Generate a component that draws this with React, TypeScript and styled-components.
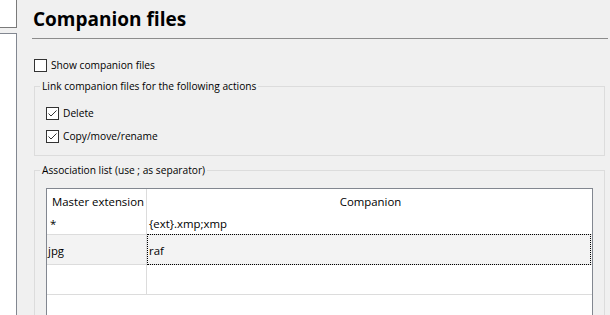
import styled, { createGlobalStyle } from 'styled-components';

const GlobalStyle = createGlobalStyle`
  html, body {
    margin: 0;
    padding: 0;
    background: #f0f0f0;
  }
  body {
    font-family: 'Open Sans', 'Noto Sans', sans-serif;
    font-size: 10.2px;
    color: #000;
  }
`;

const Page = styled.div`
  display: flex;
  width: 610px;
  height: 315px;
  overflow: hidden;
  background: #f0f0f0;
`;

const Sidebar = styled.div`
  width: 17px;
  display: flex;
  flex-direction: column;
  gap: 5px;
  flex-shrink: 0;
`;

const SearchBox = styled.div`
  height: 27px;
  background: #fff;
  border-right: 1px solid #7a7a7a;
  border-bottom: 1px solid #7a7a7a;
`;

const TreeBox = styled.div`
  flex: 1;
  background: #fff;
  border-top: 1px solid #828790;
  border-right: 1px solid #828790;
`;

const Main = styled.div`
  flex: 1;
  padding: 0 2px 0 15px;
  min-width: 0;
`;

const Header = styled.div`
  box-sizing: border-box;
  height: 39px;
  border-bottom: 1px solid #8c8c8c;
`;

const Title = styled.h1`
  margin: 0;
  padding: 6px 0 0 1px;
  font-size: 19px;
  line-height: 26px;
  font-weight: 700;
`;

const Body = styled.div`
  padding: 20px 3px 0 2px;
  display: flex;
  flex-direction: column;
`;

const CheckRow = styled.label`
  display: flex;
  align-items: center;
  gap: 4px;
  height: 13px;
  line-height: 13px;
  white-space: nowrap;
`;

const Box = styled.span`
  width: 13px;
  height: 13px;
  box-sizing: border-box;
  border: 1px solid #333;
  background: #fff;
  display: flex;
  align-items: center;
  justify-content: center;
  flex-shrink: 0;
`;

const Group = styled.fieldset`
  margin: 7px 0 0 0;
  padding: 0 11px 12px 11px;
  border: 1px solid #dcdcdc;
  min-width: 0;
`;

const Legend = styled.legend`
  margin-left: -6px;
  padding: 0 2px;
  line-height: 15px;
  white-space: nowrap;
`;

const CheckList = styled.div`
  padding-top: 13px;
  display: flex;
  flex-direction: column;
  gap: 10px;
`;

const Table = styled.div`
  margin-top: 10px;
  height: 160px;
  background: #fff;
  border: 1px solid #828790;
  display: grid;
  grid-template-columns: 100px 1fr;
  grid-auto-rows: min-content;
  font-size: 11.4px;
`;

const Cell = styled.div<{ $h: number; $indent?: number; $line?: boolean; $bg?: string; $center?: boolean }>`
  position: relative;
  height: ${({ $h }) => $h}px;
  line-height: ${({ $h }) => $h + 3}px;
  padding-left: ${({ $indent = 2 }) => $indent}px;
  background: ${({ $bg }) => $bg || '#fff'};
  border-bottom: ${({ $line }) => ($line ? '1px solid #dcdcdc' : 'none')};
  text-align: ${({ $center }) => ($center ? 'center' : 'left')};
  white-space: nowrap;
`;

const FirstCell = styled(Cell)`
  border-right: 1px solid #dcdcdc;
`;

const FocusCell = styled(Cell)`
  &::after {
    content: '';
    position: absolute;
    top: -1px;
    bottom: -1px;
    left: 0;
    right: 1px;
    border: 1px dotted #000;
  }
`;

const Check = () => (
  <svg width="11" height="11" viewBox="0 0 11 11">
    <polyline points="1.5,5.5 4,8 9.5,2.5" fill="none" stroke="#333" strokeWidth="1" />
  </svg>
);

const CheckBox = ({ checked, label }: { checked?: boolean; label: string }) => (
  <CheckRow>
    <Box>{checked && <Check />}</Box>
    <span>{label}</span>
  </CheckRow>
);

const rows = [
  { master: '*', companion: '{ext}.xmp;xmp' },
  { master: 'jpg', companion: 'raf' },
];

export default function App() {
  return (
    <>
      <GlobalStyle />
      <Page>
        <Sidebar>
          <SearchBox />
          <TreeBox />
        </Sidebar>
        <Main>
          <Header>
            <Title>Companion files</Title>
          </Header>
          <Body>
            <CheckBox label="Show companion files" />
            <Group>
              <Legend>Link companion files for the following actions</Legend>
              <CheckList>
                <CheckBox checked label="Delete" />
                <CheckBox checked label="Copy/move/rename" />
              </CheckList>
            </Group>
            <Group>
              <Legend>Association list (use ; as separator)</Legend>
              <Table>
                <FirstCell $h={22} $indent={5}>Master extension</FirstCell>
                <Cell $h={22} $center>Companion</Cell>
                <FirstCell $h={23} $indent={3} $line>{rows[0].master}</FirstCell>
                <Cell $h={23} $line>{rows[0].companion}</Cell>
                <FirstCell $h={29} $indent={1} $line $bg="#f3f3f3">{rows[1].master}</FirstCell>
                <FocusCell $h={29} $line $bg="#f3f3f3">{rows[1].companion}</FocusCell>
                <FirstCell $h={29} $line />
                <Cell $h={29} $line />
              </Table>
            </Group>
          </Body>
        </Main>
      </Page>
    </>
  );
}
